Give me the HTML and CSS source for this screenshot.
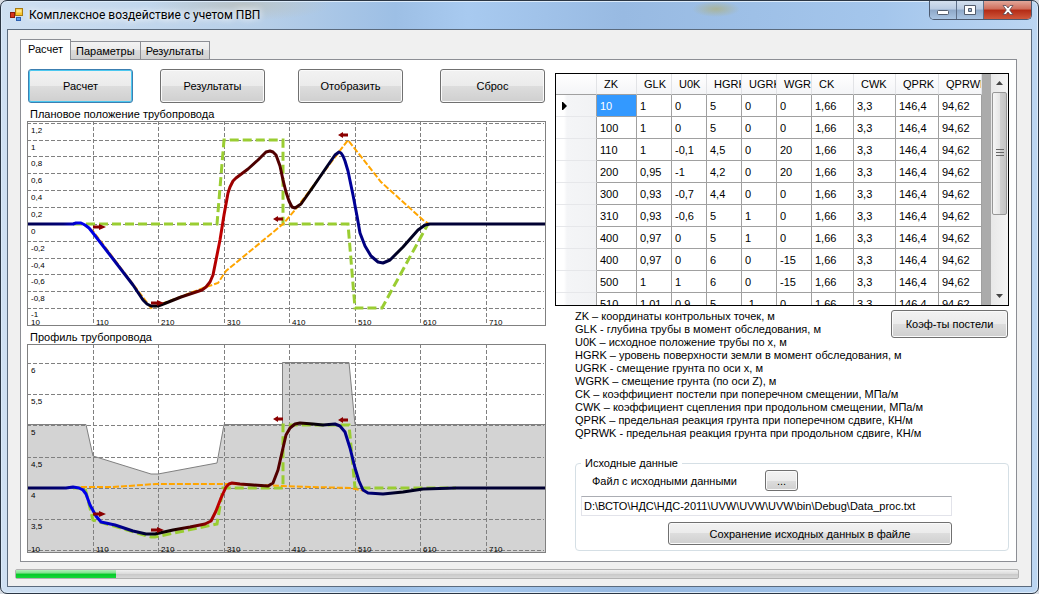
FILE: index.html
```
<!DOCTYPE html>
<html lang="ru">
<head>
    <meta charset="UTF-8">
    <meta name="viewport" content="width=device-width, initial-scale=1.0">
    <title>Комплексное воздействие с учетом ПВП</title>
    <link rel="stylesheet" href="styles.css">
</head>
<body>
<div class="window">
    <header class="titlebar">
        <svg class="app-icon" width="14" height="14" viewBox="0 0 14 14">
            <rect x="5.5" y="0.5" width="7" height="7" fill="#f7c52c" stroke="#a87a10"/>
            <rect x="6.5" y="1.5" width="5" height="3" fill="#fde58a"/>
            <rect x="0.5" y="4.5" width="4" height="5" fill="#d8341c" stroke="#8c1a0c"/>
            <rect x="6.5" y="9.5" width="4" height="3" fill="#5b9be8" stroke="#2c5fb0"/>
        </svg>
        <h1>Комплексное воздействие с учетом ПВП</h1>
        <div class="controls">
            <button class="control" aria-label="Свернуть">
                <svg width="12" height="12" viewBox="0 0 12 12"><rect x="0.5" y="6.5" width="11" height="4" rx="1" fill="#fff" stroke="#535d6d"/></svg>
            </button>
            <button class="control" aria-label="Развернуть">
                <svg width="12" height="12" viewBox="0 0 12 12"><path d="M.5 1.5h11v9H.5zM4.500 4.500v3h3v-3z" fill="#fff" fill-rule="evenodd" stroke="#535d6d"/></svg>
            </button>
            <button class="control close" aria-label="Закрыть">
                <svg width="12" height="12" viewBox="0 0 12 12"><path d="M1 1.500h3l2 2.500 2-2.500h3L7.700 6l3.300 4.500H8L6 8l-2 2.500H1L4.300 6z" fill="#fff" stroke="#5b4a55" stroke-width=".8"/></svg>
            </button>
        </div>
    </header>

    <main class="client">
        <!-- Tabs -->
        <nav class="tabs" role="tablist">
            <button class="tab active" role="tab" aria-selected="true">Расчет</button>
            <button class="tab" role="tab">Параметры</button>
            <button class="tab" role="tab">Результаты</button>
        </nav>

        <div class="page">
            <section class="left">
                <div class="actions">
                    <button class="btn default">Расчет</button>
                    <button class="btn">Результаты</button>
                    <button class="btn">Отобразить</button>
                    <button class="btn">Сброс</button>
                </div>

                <!-- Plan view -->
                <h2>Плановое положение трубопровода</h2>
                <svg class="chart" viewBox="0 0 519 205">
                    <defs>
                        <linearGradient id="stress" gradientUnits="userSpaceOnUse" x1="0" y1="0" x2="519" y2="0">
                            <stop offset="0" stop-color="#000050"/>
                            <stop offset=".07" stop-color="#000078"/>
                            <stop offset=".1" stop-color="#0000f0"/>
                            <stop offset=".14" stop-color="#0000dc"/>
                            <stop offset=".2" stop-color="#000068"/>
                            <stop offset=".25" stop-color="#000008"/>
                            <stop offset=".28" stop-color="#180000"/>
                            <stop offset=".34" stop-color="#800000"/>
                            <stop offset=".37" stop-color="#c40000"/>
                            <stop offset=".39" stop-color="#a80000"/>
                            <stop offset=".43" stop-color="#480000"/>
                            <stop offset=".5" stop-color="#560000"/>
                            <stop offset=".55" stop-color="#080000"/>
                            <stop offset=".58" stop-color="#000028"/>
                            <stop offset=".62" stop-color="#0000a0"/>
                            <stop offset=".66" stop-color="#000078"/>
                            <stop offset=".72" stop-color="#000018"/>
                            <stop offset=".8" stop-color="#000038"/>
                            <stop offset="1" stop-color="#000030"/>
                        </linearGradient>
                        <path id="arrow-right" d="M0-1.500h6v-1.500l7 3-7 3v-1.500H0z"/>
                        <path id="arrow-left" d="M0 0l5-3v1.500h5v3H5V3z"/>
                    </defs>
                    <path class="grid" d="M0 2.500h517M0 19.500h517M0 35.500h517M0 52.500h517M0 69.500h517M0 86.500h517M0 103.500h517M0 120.500h517M0 137.500h517M0 153.500h517M0 170.500h517M0 187.500h517"/>
                    <path class="grid" d="M66.500 0v205M131.500 0v205M197.500 0v205M262.500 0v205M328.500 0v205M393.500 0v205M459.500 0v205"/>
                    <path class="soil" d="M46 103H190L197 19H256V103H321L328 187H355L401 103"/>
                    <path class="initial" d="M56 103L66 110 124 187 179 166 191 162 199 150 256 103 268 89 321 19 354 61 396 99 402 103"/>
                    <path class="pipe" d="M0 103H46L49 102 54 102 58 104 62 107 66 112 83 134 106 164 116 179 120 183 124 185H131L139 182 154 176 169 171 175 169 179 166 183 161 186 154 189 139 193 119 197 94 201 72 203 66 206 60 209 57 213 54 221 48 231 39 239 31 243 30 246 31 249 34 253 45 256 59 259 71 262 80 265 86 268 87 274 83 286 66 299 47 308 34 312 31 314 32 316 35 318 40 321 50 326 74 330 95 333 112 338 125 344 135 351 141 356 142 363 139 376 126 391 109 398 104 403 103H519"/>
                    <g class="arrows">
                        <use href="#arrow-right" x="66" y="106"/>
                        <use href="#arrow-right" x="124" y="182"/>
                        <use href="#arrow-left" x="246" y="98"/>
                        <use href="#arrow-left" x="311" y="14"/>
                    </g>
                    <g class="labels">
                        <text x="4" y="12">1,2</text>
                        <text x="4" y="29">1</text>
                        <text x="4" y="45">0,8</text>
                        <text x="4" y="62">0,6</text>
                        <text x="4" y="79">0,4</text>
                        <text x="4" y="96">0,2</text>
                        <text x="4" y="113">0</text>
                        <text x="4" y="130">-0,2</text>
                        <text x="4" y="147">-0,4</text>
                        <text x="4" y="163">-0,6</text>
                        <text x="4" y="180">-0,8</text>
                        <text x="4" y="196">-1</text>
                        <text x="4" y="204">10</text>
                        <text x="69" y="204">110</text>
                        <text x="134" y="204">210</text>
                        <text x="200" y="204">310</text>
                        <text x="265" y="204">410</text>
                        <text x="331" y="204">510</text>
                        <text x="396" y="204">610</text>
                        <text x="462" y="204">710</text>
                    </g>
                </svg>

                <!-- Profile -->
                <h2>Профиль трубопровода</h2>
                <svg class="chart" viewBox="0 0 519 209">
                    <path class="ground" d="M0 80.500H59L66 112 124 130H131L190 119 197 80.500H255.500V18.500H322L328 80.500H519V209H0z"/>
                    <path class="grid" d="M0 19.500h517M0 50.500h517M0 81.500h517M0 113.500h517M0 144.500h517M0 175.500h517M0 206.500h517"/>
                    <path class="grid" d="M66.500 0v209M131.500 0v209M197.500 0v209M262.500 0v209M328.500 0v209M393.500 0v209M459.500 0v209"/>
                    <path class="soil" d="M46 144H58L66 176 124 193H128L190 180 196 144H256V81H322L328 144H429"/>
                    <path class="initial" d="M54 143H86L129 140H203L256 142 286 143 323 144 338 147"/>
                    <path class="pipe" d="M0 144H39L46 143 52 144 56 146 59 150 63 161 69 172 74 178 88 181 106 187 119 190H128L146 186 163 183 178 180 184 177 189 167 194 154 199 143 202 140 205 139 213 140 226 141 241 142 246 139 251 126 256 104 259 91 263 84 268 80 273 79 286 80 296 81 308 80 313 82 318 88 323 104 328 124 332 137 336 146 341 149 356 150 376 148 396 145 429 144H519"/>
                    <g class="arrows">
                        <use href="#arrow-right" x="66" y="170"/>
                        <use href="#arrow-right" x="124" y="186"/>
                        <use href="#arrow-left" x="246" y="75"/>
                        <use href="#arrow-left" x="311" y="76"/>
                    </g>
                    <g class="labels">
                        <text x="4" y="29">6</text>
                        <text x="4" y="60">5,5</text>
                        <text x="4" y="91">5</text>
                        <text x="4" y="123">4,5</text>
                        <text x="4" y="154">4</text>
                        <text x="4" y="185">3,5</text>
                        <text x="4" y="208">10</text>
                        <text x="69" y="208">110</text>
                        <text x="134" y="208">210</text>
                        <text x="200" y="208">310</text>
                        <text x="265" y="208">410</text>
                        <text x="331" y="208">510</text>
                        <text x="396" y="208">610</text>
                        <text x="462" y="208">710</text>
                    </g>
                </svg>
            </section>

            <section class="right">
                <!-- Control points -->
                <div class="datagrid">
                    <table>
                        <colgroup>
                            <col class="c-row"><col class="c-key">
                            <col class="c-s"><col class="c-s"><col class="c-s"><col class="c-s"><col class="c-s">
                            <col class="c-m"><col class="c-m"><col class="c-l"><col class="c-l">
                        </colgroup>
                        <thead>
                            <tr><th></th><th>ZK</th><th>GLK</th><th>U0K</th><th>HGRK</th><th>UGRK</th><th>WGRK</th><th>CK</th><th>CWK</th><th>QPRK</th><th>QPRWK</th></tr>
                        </thead>
                        <tbody>
                            <tr><th><svg width="5" height="8" viewBox="0 0 5 8"><path d="M0 0h1l4 4-4 4H0z"/></svg></th><td class="selected">10</td><td>1</td><td>0</td><td>5</td><td>0</td><td>0</td><td>1,66</td><td>3,3</td><td>146,4</td><td>94,62</td></tr>
                            <tr><th></th><td>100</td><td>1</td><td>0</td><td>5</td><td>0</td><td>0</td><td>1,66</td><td>3,3</td><td>146,4</td><td>94,62</td></tr>
                            <tr><th></th><td>110</td><td>1</td><td>-0,1</td><td>4,5</td><td>0</td><td>20</td><td>1,66</td><td>3,3</td><td>146,4</td><td>94,62</td></tr>
                            <tr><th></th><td>200</td><td>0,95</td><td>-1</td><td>4,2</td><td>0</td><td>20</td><td>1,66</td><td>3,3</td><td>146,4</td><td>94,62</td></tr>
                            <tr><th></th><td>300</td><td>0,93</td><td>-0,7</td><td>4,4</td><td>0</td><td>0</td><td>1,66</td><td>3,3</td><td>146,4</td><td>94,62</td></tr>
                            <tr><th></th><td>310</td><td>0,93</td><td>-0,6</td><td>5</td><td>1</td><td>0</td><td>1,66</td><td>3,3</td><td>146,4</td><td>94,62</td></tr>
                            <tr><th></th><td>400</td><td>0,97</td><td>0</td><td>5</td><td>1</td><td>0</td><td>1,66</td><td>3,3</td><td>146,4</td><td>94,62</td></tr>
                            <tr><th></th><td>400</td><td>0,97</td><td>0</td><td>6</td><td>0</td><td>-15</td><td>1,66</td><td>3,3</td><td>146,4</td><td>94,62</td></tr>
                            <tr><th></th><td>500</td><td>1</td><td>1</td><td>6</td><td>0</td><td>-15</td><td>1,66</td><td>3,3</td><td>146,4</td><td>94,62</td></tr>
                            <tr><th></th><td>510</td><td>1,01</td><td>0,9</td><td>5</td><td>-1</td><td>0</td><td>1,66</td><td>3,3</td><td>146,4</td><td>94,62</td></tr>
                        </tbody>
                    </table>
                    <div class="scrollbar">
                        <svg width="7" height="4" viewBox="0 0 7 4"><path d="M0 4l3.500-4L7 4z" fill="#444"/></svg>
                        <div class="track">
                            <div class="thumb">
                                <svg width="8" height="8" viewBox="0 0 8 8"><path d="M0 .5h8M0 3.500h8M0 6.500h8" stroke="#666"/></svg>
                            </div>
                        </div>
                        <svg width="7" height="4" viewBox="0 0 7 4"><path d="M0 0h7L3.500 4z" fill="#444"/></svg>
                    </div>
                </div>

                <div class="notes">
                    <ul>
                        <li>ZK – координаты контрольных точек, м</li>
                        <li>GLK - глубина трубы в момент обследования, м</li>
                        <li>U0K – исходное положение трубы по x, м</li>
                        <li>HGRK – уровень поверхности земли в момент обследования, м</li>
                        <li>UGRK - смещение грунта по оси x, м</li>
                        <li>WGRK – смещение грунта (по оси Z), м</li>
                        <li>CK – коэффициент постели при поперечном смещении, МПа/м</li>
                        <li>CWK – коэффициент сцепления при продольном смещении, МПа/м</li>
                        <li>QPRK – предельная реакция грунта при поперечном сдвиге, КН/м</li>
                        <li>QPRWK - предельная реакция грунта при продольном сдвиге, КН/м</li>
                    </ul>
                    <button class="btn bed">Коэф-ты постели</button>
                </div>

                <!-- Source data file -->
                <fieldset>
                    <legend>Исходные данные</legend>
                    <div class="file-row">
                        <label for="path">Файл с исходными данными</label>
                        <button class="btn browse">...</button>
                    </div>
                    <input type="text" id="path" value="D:\ВСТО\НДС\НДС-2011\UVW\UVW\UVW\bin\Debug\Data_proc.txt">
                    <button class="btn save">Сохранение исходных данных в файле</button>
                </fieldset>
            </section>
        </div>

        <div class="progress"><div class="bar" style="width: 10%"></div></div>
    </main>
</div>
</body>
</html>
```
FILE: styles.css
```
* {
    box-sizing: border-box;
}

body {
    margin: 0;
    background-color: #d8dde4;
    font-family: "Liberation Sans", Arial, sans-serif;
    font-size: 11px;
    color: #000;
}

button, input {
    font: inherit;
    color: inherit;
}

/* Window frame */
.window {
    display: flex;
    flex-direction: column;
    min-height: 100vh;
    padding: 0 6px 6px;
    border: 1px solid #2b3644;
    border-radius: 7px;
    background:
        radial-gradient(24px 8px at 715px 8px, #a9b49a, transparent),
        radial-gradient(90px 16px at 240px 4px, #b9c3c6, transparent),
        linear-gradient(to right, #cfe0f2, #b7cfe8 25%, #9dbfe5 38%, #a8caf0 45%, #98bae2 60%, #a4c6ec 85%, #bcd6f2);
    box-shadow: inset 0 0 0 1px #dcebfa;
}

.titlebar {
    display: flex;
    align-items: center;
    height: 28px;
    padding-left: 3px;
}

.titlebar h1 {
    flex: 1;
    margin: 0 0 0 5px;
    font-family: Roboto, "Open Sans", sans-serif;
    font-size: 12px;
    font-weight: normal;
    text-shadow: 0 0 6px #fff, 0 0 8px #fff;
}

.controls {
    display: flex;
    align-self: flex-start;
    height: 19px;
    border: 1px solid #4c5a70;
    border-top: 0;
    border-radius: 0 0 5px 5px;
    overflow: hidden;
}

.control {
    display: flex;
    align-items: center;
    justify-content: center;
    width: 27px;
    padding: 0;
    border: 0;
    border-right: 1px solid #5e6f88;
    background: linear-gradient(#d3dfee, #b9cbe2 45%, #8ea8c8 50%, #a9c4e2);
}

.close {
    width: 47px;
    border-right: 0;
    background: linear-gradient(#e2a79a, #cf6c5a 45%, #b32a14 50%, #d0583c);
}

.client {
    flex: 1;
    padding: 9px 14px 6px 12px;
    border: 1px solid #5b6b7e;
    background-color: #f0f0f0;
}

/* Tabs */
.tabs {
    display: flex;
    align-items: flex-end;
}

.tab {
    height: 18px;
    margin-bottom: 1px;
    padding: 0 5px;
    border: 1px solid #8c8e94;
    border-bottom: 0;
    border-left: 0;
    background: linear-gradient(#f3f3f3, #ebebeb 50%, #dcdcdc 50%, #d0d0d0);
}

.tab.active {
    position: relative;
    height: 21px;
    margin-bottom: 0;
    padding: 0 7px 2px;
    border-left: 1px solid #8c8e94;
    background: #fff;
}

.page {
    display: grid;
    grid-template-columns: minmax(0, 519fr) minmax(0, 454fr);
    gap: 9px;
    margin-top: -1px;
    padding: 9px 7px 8px 6px;
    border: 1px solid #8c8e94;
    background-color: #fff;
}

/* Buttons */
.btn {
    padding: 0;
    border: 1px solid #707070;
    border-radius: 3px;
    background: linear-gradient(#f2f2f2, #ebebeb 50%, #dddddd 50%, #cfcfcf);
    box-shadow: inset 0 0 0 1px #fafafa;
    cursor: pointer;
}

.btn.default {
    border-color: #3c7fb1;
    box-shadow: inset 0 0 0 1px #4cc8f0;
}

.actions {
    display: grid;
    grid-template-columns: 132fr 138fr 142fr 105fr;
    padding: 0 1px;
}

.actions .btn {
    width: 105px;
    height: 34px;
}

/* Charts */
.left h2 {
    margin: 0;
    padding: 4px 0 0 3px;
    font-size: 11px;
    font-weight: normal;
    line-height: 14px;
}

.chart {
    display: block;
    width: 100%;
    outline: 1px solid #808080;
    outline-offset: -1px;
}

.grid {
    stroke: #808080;
    stroke-dasharray: 4 2;
}

.soil {
    fill: none;
    stroke: #9acd32;
    stroke-width: 3;
    stroke-dasharray: 9 4;
}

.initial {
    fill: none;
    stroke: #ffa500;
    stroke-width: 2;
    stroke-dasharray: 6 2;
}

.pipe {
    fill: none;
    stroke: url(#stress);
    stroke-width: 3;
    stroke-linejoin: round;
}

.ground {
    fill: #d3d3d3;
    stroke: #808080;
}

.arrows {
    fill: #8b0000;
}

.labels {
    font-size: 8px;
}

/* Data grid */
.right {
    padding-top: 4px;
}

.datagrid {
    display: flex;
    justify-content: space-between;
    height: 233px;
    border: 1px solid #000;
    background-color: #ababab;
    overflow: hidden;
}

.datagrid table {
    width: 426px;
    height: 240px;
    table-layout: fixed;
    border-collapse: separate;
    border-spacing: 0;
}

.c-row { width: 41px; }
.c-key { width: 40px; }
.c-s { width: 35px; }
.c-m { width: 42px; }
.c-l { width: 43px; }

.datagrid th, .datagrid td {
    height: 22px;
    padding: 0 0 0 3px;
    border-right: 1px solid #a0a0a0;
    border-bottom: 1px solid #a0a0a0;
    background-color: #fff;
    font-weight: normal;
    text-align: left;
    white-space: nowrap;
    overflow: hidden;
}

.datagrid thead th {
    height: 21px;
    padding-left: 7px;
    border-right-color: #e2e3e6;
    background: linear-gradient(#fff, #f4f5f7);
}

.datagrid tbody th {
    padding-left: 6px;
    border-bottom-color: #e6e7ea;
    background: linear-gradient(to right, #fff 8px, #f4f5f7 11px, #f1f2f4);
}

.datagrid td.selected {
    background-color: #3399ff;
    color: #fff;
}

.scrollbar {
    display: flex;
    flex-direction: column;
    align-items: center;
    width: 17px;
    padding: 7px 1px;
    background: linear-gradient(to right, #e8e8e8, #f4f4f4);
}

.track {
    flex: 1;
    width: 100%;
    padding: 7px 0;
}

.thumb {
    display: flex;
    align-items: center;
    justify-content: center;
    height: 63%;
    border: 1px solid #979797;
    border-radius: 2px;
    background: linear-gradient(to right, #f5f5f5, #e6e6e6 50%, #d0d0d0 55%, #c4c4c4);
}

/* Notes */
.notes {
    display: flex;
    justify-content: space-between;
    align-items: flex-start;
    padding: 4px 1px 0 20px;
}

.notes ul {
    margin: 0;
    padding: 0;
    list-style: none;
    line-height: 13px;
    white-space: nowrap;
}

.bed {
    flex: none;
    width: 117px;
    height: 28px;
    margin-left: -60px;
}

/* Source file */
fieldset {
    margin: 17px 0 0 20px;
    padding: 0 56px 5px 5px;
    border: 1px solid #d5dfe5;
    border-radius: 4px;
}

legend {
    padding: 0 4px;
    line-height: 13px;
}

.file-row {
    display: flex;
    align-items: center;
    gap: 28px;
    padding-left: 11px;
}

.browse {
    width: 33px;
    height: 21px;
}

fieldset input {
    display: block;
    width: 100%;
    height: 20px;
    margin: 5px 0 6px;
    padding: 0 2px;
    border: 1px solid #e2e3ea;
    border-top-color: #abadb3;
}

.save {
    display: block;
    width: 284px;
    height: 23px;
    margin-left: auto;
}

/* Progress */
.progress {
    height: 10px;
    margin: 7px -2px 0 -5px;
    border: 1px solid #b2b2b2;
    border-radius: 2px;
    background: linear-gradient(#f0f0f0, #dcdcdc 45%, #c8c8c8 50%, #d8d8d8);
}

.bar {
    height: 100%;
    background: linear-gradient(#b4f0bc, #7be28a 40%, #05c828 50%, #14d838);
}
```
